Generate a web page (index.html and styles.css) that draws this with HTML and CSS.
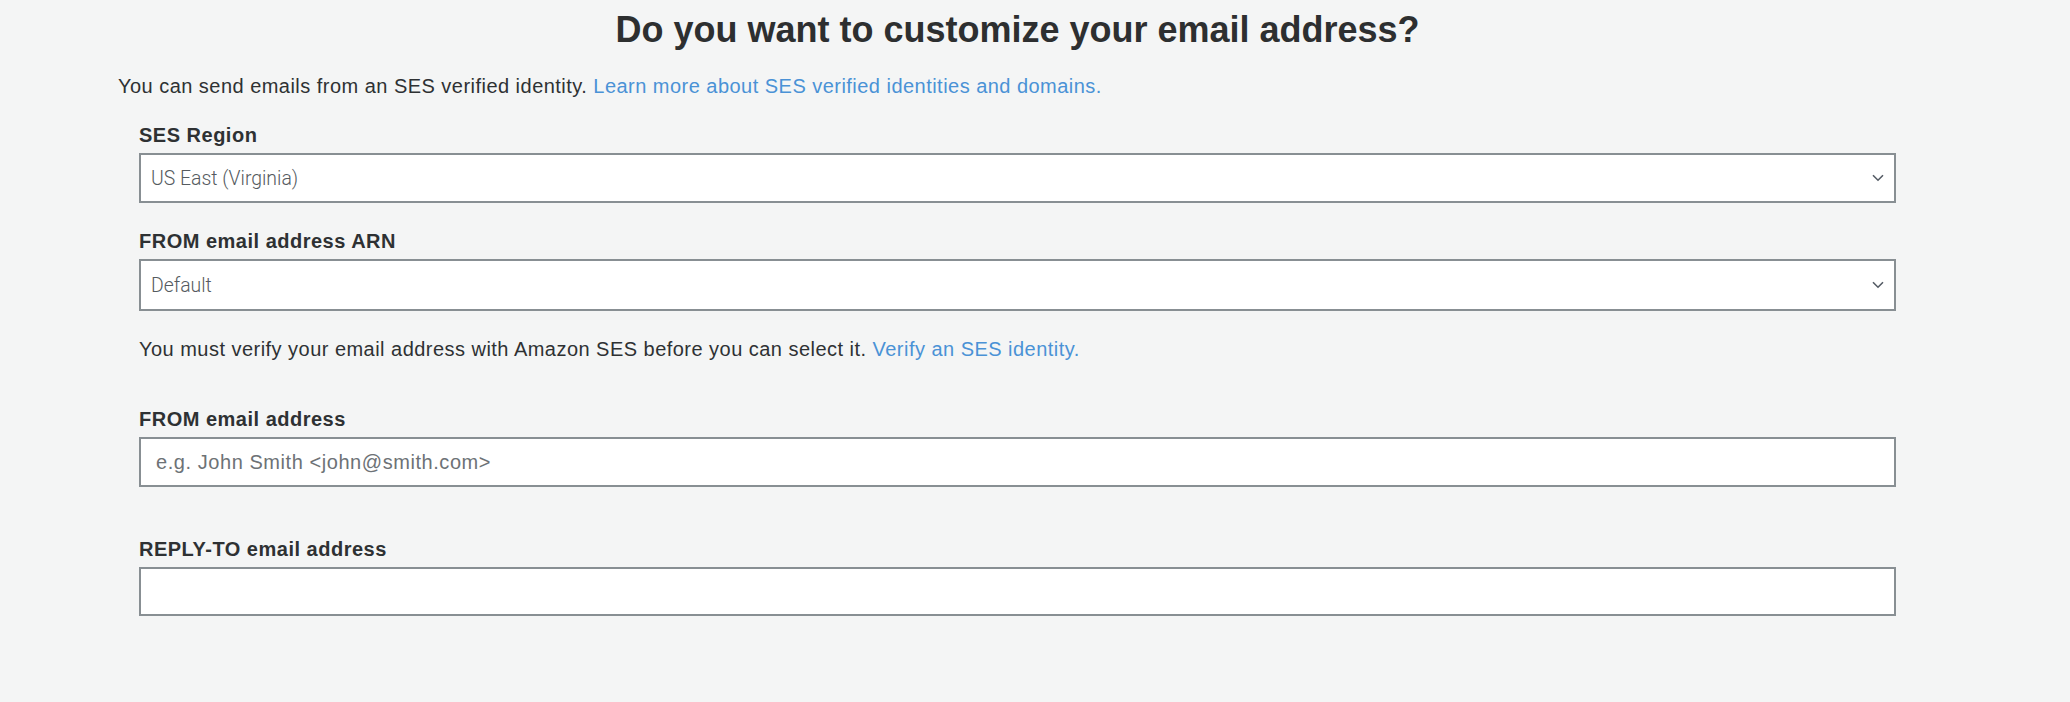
FILE: index.html
```html
<!DOCTYPE html>
<html lang="en">
<head>
<meta charset="utf-8">
<title>Customize email address</title>
<link rel="stylesheet" href="styles.css">
</head>
<body>
<main class="page">
  <h1 class="title">Do you want to customize your email address?</h1>
  <p class="intro">You can send emails from an SES verified identity. <a class="link" href="#">Learn more about SES verified identities and domains.</a></p>
  <form class="form">
    <div class="field">
      <label class="label">SES Region</label>
      <div class="select">
        <span class="select-value">US East (Virginia)</span>
        <svg class="chevron" width="12" height="8" viewBox="0 0 12 8"><path d="M1 1.2 L6 6.2 L11 1.2" fill="none" stroke="#545b64" stroke-width="1.6"/></svg>
      </div>
    </div>
    <div class="field field-arn">
      <label class="label">FROM email address ARN</label>
      <div class="select select-tall">
        <span class="select-value">Default</span>
        <svg class="chevron" width="12" height="8" viewBox="0 0 12 8"><path d="M1 1.2 L6 6.2 L11 1.2" fill="none" stroke="#545b64" stroke-width="1.6"/></svg>
      </div>
    </div>
    <p class="help">You must verify your email address with Amazon SES before you can select it. <a class="link" href="#">Verify an SES identity.</a></p>
    <div class="field field-from">
      <label class="label">FROM email address</label>
      <input class="input" type="text" placeholder="e.g. John Smith &lt;john@smith.com&gt;">
    </div>
    <div class="field field-reply">
      <label class="label">REPLY-TO email address</label>
      <input class="input input-short" type="text">
    </div>
  </form>
</main>
</body>
</html>
```

FILE: styles.css
```css
html, body {
  margin: 0;
  padding: 0;
}

body {
  background: #f4f5f5;
  color: #2e3133;
  font-family: "Liberation Sans", Arial, sans-serif;
  font-size: 20px;
  letter-spacing: 0.47px;
}

.page {
  padding: 8px 153px 0 118px;
}

.title {
  margin: 0;
  font-size: 36px;
  line-height: 44px;
  font-weight: 700;
  letter-spacing: 0;
  text-align: center;
  color: #2d2f30;
}

.intro {
  margin: 20px 0 0;
  line-height: 28px;
}

.link {
  color: #4a92d6;
  text-decoration: none;
}

.form {
  margin-top: 22px;
  padding: 0 21px;
}

.field {
  display: flex;
  flex-direction: column;
  gap: 5px;
}

.field-arn {
  margin-top: 25px;
}

.field-from {
  margin-top: 43px;
}

.field-reply {
  margin-top: 49px;
}

.label {
  font-weight: 700;
  line-height: 26px;
  letter-spacing: 0.5px;
  color: #2e3133;
}

.select {
  box-sizing: border-box;
  height: 50px;
  display: flex;
  align-items: center;
  padding: 0 10px 0 10px;
  background: #ffffff;
  border: 2px solid #888f93;
}

.select-tall {
  height: 52px;
}

.select-value {
  flex: 1;
  font-family: Roboto, "Liberation Sans", sans-serif;
  font-weight: 300;
  font-size: 19.4px;
  letter-spacing: 0;
  color: #555b60;
}

.chevron {
  display: block;
}

.help {
  margin: 24px 0 0;
  line-height: 28px;
}

.input {
  box-sizing: border-box;
  height: 50px;
  width: 100%;
  margin: 0;
  padding: 0 15px;
  background: #ffffff;
  border: 2px solid #888f93;
  border-radius: 0;
  font-family: "Liberation Sans", Arial, sans-serif;
  font-size: 20px;
  letter-spacing: 0.56px;
  color: #2e3133;
  outline: none;
}

.input-short {
  height: 49px;
}

.input::placeholder {
  color: #6d7276;
  opacity: 1;
}
```
